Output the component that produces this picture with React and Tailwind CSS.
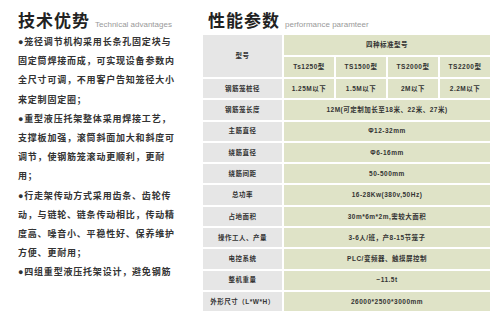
import React from 'react';

const cjk = { fontFamily: '"Liberation Sans", "Noto Sans CJK SC", sans-serif' };

const paragraphs = [
  ['●笼径调节机构采用长条孔固定块与', '固定筒焊接而成，可实现设备参数内', '全尺寸可调，不用客户告知笼径大小', '来定制固定圈；'],
  ['●重型液压托架整体采用焊接工艺，', '支撑板加强，滚筒斜面加大和斜度可', '调节，使钢筋笼滚动更顺利，更耐', '用；'],
  ['●行走架传动方式采用齿条、齿轮传', '动，与链轮、链条传动相比，传动精', '度高、噪音小、平稳性好、保养维护', '方便、更耐用；'],
  ['●四组重型液压托架设计，避免钢筋'],
];

const rows = [
  ['钢筋笼长度', '12M(可定制加长至18米、22米、27米)'],
  ['主筋直径', 'Φ12-32mm'],
  ['绕筋直径', 'Φ6-16mm'],
  ['绕筋间距', '50-500mm'],
  ['总功率', '16-28Kw(380v,50Hz)'],
  ['占地面积', '30m*6m*2m,需较大面积'],
  ['操作工人、产量', '3-6人/班，产8-15节笼子'],
  ['电控系统', 'PLC/变频器、触摸屏控制'],
  ['整机重量', '~11.5t'],
  ['外形尺寸（L*W*H）', '26000*2500*3000mm'],
];

const label = 'bg-[#e6e6e6] flex items-center justify-center';
const value = 'bg-[#dfe3c7] flex items-center justify-center';

function Title({ cn, en }) {
  return (
    <div className="flex items-end gap-[5px] h-[26px]">
      <span className="text-[17px] font-bold text-[#222] tracking-[1px] leading-none" style={cjk}>{cn}</span>
      <span className="text-[8px] text-[#999] leading-none pb-[1px]" style={{ fontFamily: '"Liberation Sans", sans-serif' }}>{en}</span>
    </div>
  );
}

export default function App() {
  return (
    <div className="w-[500px] h-[321px] bg-white flex overflow-hidden" style={cjk}>
      <div className="w-[203px] pl-[18px] pt-[4px]">
        <Title cn="技术优势" en="Technical advantages" />
        <div className="mt-[3px] text-[9px] font-bold text-[#333] tracking-[0.8px]">
          {paragraphs.map((p, i) => (
            <div key={i}>
              {p.map((line, j) => (
                <div key={j} className="h-[19.2px] leading-[19.2px] whitespace-nowrap">{line}</div>
              ))}
            </div>
          ))}
        </div>
      </div>
      <div className="pt-[4px]">
        <div className="pl-[5px]">
          <Title cn="性能参数" en="performance paramteer" />
        </div>
        <div className="mt-[5px] grid grid-cols-[79px_50px_50px_50px_50px] grid-rows-[20px_20px_repeat(11,19.3px)] gap-[2px] text-[6.5px] font-bold text-[#333] tracking-[0.5px]">
          <div className={`${label} row-span-2`}>型号</div>
          <div className={`${value} col-span-4`}>四种标准型号</div>
          <div className={value}>Ts1250型</div>
          <div className={value}>TS1500型</div>
          <div className={value}>TS2000型</div>
          <div className={value}>TS2200型</div>
          <div className={label}>钢筋笼桩径</div>
          <div className={value}>1.25M以下</div>
          <div className={value}>1.5M以下</div>
          <div className={value}>2M以下</div>
          <div className={value}>2.2M以下</div>
          {rows.map(([l, v]) => (
            <React.Fragment key={l}>
              <div className={label}>{l}</div>
              <div className={`${value} col-span-4`}>{v}</div>
            </React.Fragment>
          ))}
        </div>
      </div>
    </div>
  );
}
